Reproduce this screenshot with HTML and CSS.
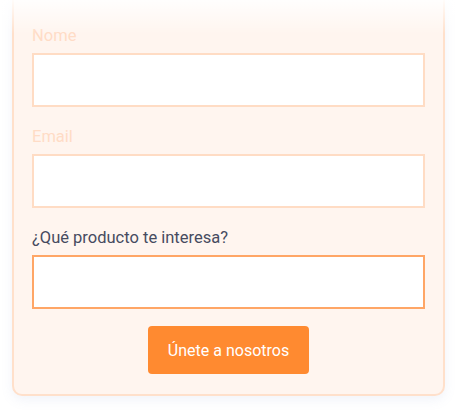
FILE: index.html
```html
<!DOCTYPE html>
<html lang="es">
<head>
<meta charset="utf-8">
<title>Formulario</title>
<link rel="stylesheet" href="styles.css">
</head>
<body>
<div class="page">
  <form class="card">
    <div class="field">
      <label class="label label-faded">Nome</label>
      <input class="input input-soft" type="text">
    </div>
    <div class="field">
      <label class="label label-faded">Email</label>
      <input class="input input-soft" type="email">
    </div>
    <div class="field">
      <label class="label">¿Qué producto te interesa?</label>
      <input class="input input-active" type="text">
    </div>
    <div class="actions">
      <button class="button" type="button">Únete a nosotros</button>
    </div>
  </form>
  <div class="fade"></div>
</div>
</body>
</html>
```

FILE: styles.css
```css
html, body {
  margin: 0;
  padding: 0;
  background: #ffffff;
  font-family: Roboto, "Noto Sans", sans-serif;
}
.page {
  position: relative;
  padding: 0 13px 15px 12px;
  overflow: hidden;
  height: 413px;
  box-sizing: border-box;
}
.card {
  margin-top: -14px;
  background: #fff5ef;
  border: 2px solid #ffe0cb;
  border-radius: 10px;
  padding: 36px 18px 20px;
  box-shadow: 0 4px 12px rgba(120, 140, 200, 0.10);
  display: flex;
  flex-direction: column;
  gap: 18px;
}
.field {
  display: flex;
  flex-direction: column;
}
.label {
  font-size: 16.5px;
  font-weight: 400;
  line-height: 24px;
  margin-bottom: 5px;
  color: #464b60;
}
.label-faded {
  color: #ffdcc6;
}
.input {
  box-sizing: border-box;
  height: 54px;
  width: 100%;
  background: #ffffff;
  border: 2px solid #ffdcc4;
  border-radius: 0;
  outline: none;
  margin: 0;
}
.input-active {
  border-color: #ffa666;
}
.actions {
  display: flex;
  justify-content: center;
  margin-top: -1px;
}
.button {
  height: 48px;
  padding: 0 20px;
  background: #ff8a30;
  color: #ffffff;
  border: none;
  border-radius: 4px;
  font-family: inherit;
  font-size: 16px;
}
.fade {
  position: absolute;
  left: 0;
  right: 0;
  top: 0;
  height: 34px;
  background: linear-gradient(to bottom, rgba(255,255,255,0.9), rgba(255,255,255,0));
  pointer-events: none;
}
```
